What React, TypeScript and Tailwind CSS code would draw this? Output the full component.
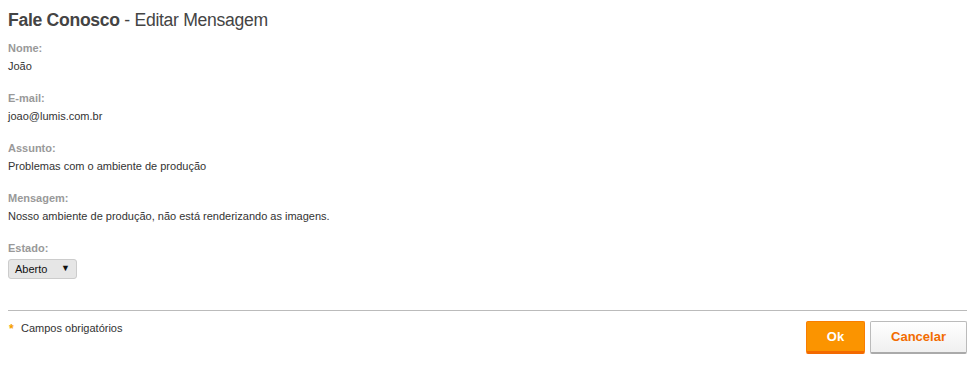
import React from "react";

const fields = [
  { label: "Nome:", value: "João" },
  { label: "E-mail:", value: "joao@lumis.com.br" },
  { label: "Assunto:", value: "Problemas com o ambiente de produção" },
  { label: "Mensagem:", value: "Nosso ambiente de produção, não está renderizando as imagens." },
];

export default function App() {
  return (
    <div className="w-[975px] h-[387px] bg-white px-2 pt-[8px] text-[#333]" style={{ fontFamily: '"Liberation Sans", Arial, sans-serif' }}>
      <h1 className="text-[17.6px] leading-[24px] text-[#444] tracking-[-0.3px]">
        <span className="font-bold">Fale Conosco</span> - Editar Mensagem
      </h1>
      <div className="mt-[10px] flex flex-col">
        {fields.map((f) => (
          <div key={f.label} className="h-[50px]">
            <div className="text-[11px] leading-[12px] font-bold text-[#999]">{f.label}</div>
            <div className="mt-[6px] text-[11px] leading-[12px] text-[#333]">{f.value}</div>
          </div>
        ))}
        <div>
          <div className="text-[11px] leading-[12px] font-bold text-[#999]">Estado:</div>
          <div className="mt-[5px] w-[69px] h-[20px] rounded-[3px] border border-[#ccc] bg-[#e6e6e6] flex items-center justify-between pl-[6px] pr-[6px] text-[11px] text-[#111]">
            <span>Aberto</span>
            <span className="text-[9px]">▼</span>
          </div>
        </div>
      </div>
      <div className="mt-[31px] border-t border-[#bbb]" />
      <div className="flex justify-between pt-[10px]">
        <div className="flex items-center text-[11px] text-[#333] h-[14px]">
          <span className="w-[13px] pl-[1px] text-[#f5a000] text-[12px] font-bold leading-[10px] mt-[1px]">*</span>
          <span>Campos obrigatórios</span>
        </div>
        <div className="flex gap-[5px]">
          <button className="w-[59px] h-[33px] bg-[#fb9400] border border-[#f97e00] border-b-[3px] border-b-[#f36a00] rounded-[2px] text-white font-bold text-[13px]">Ok</button>
          <button className="w-[97px] h-[33px] bg-gradient-to-b from-white to-[#f0f0f0] border border-[#bbb] border-b-[2px] border-b-[#aaa] rounded-[2px] text-[#f26c00] font-bold text-[13px]">Cancelar</button>
        </div>
      </div>
    </div>
  );
}
